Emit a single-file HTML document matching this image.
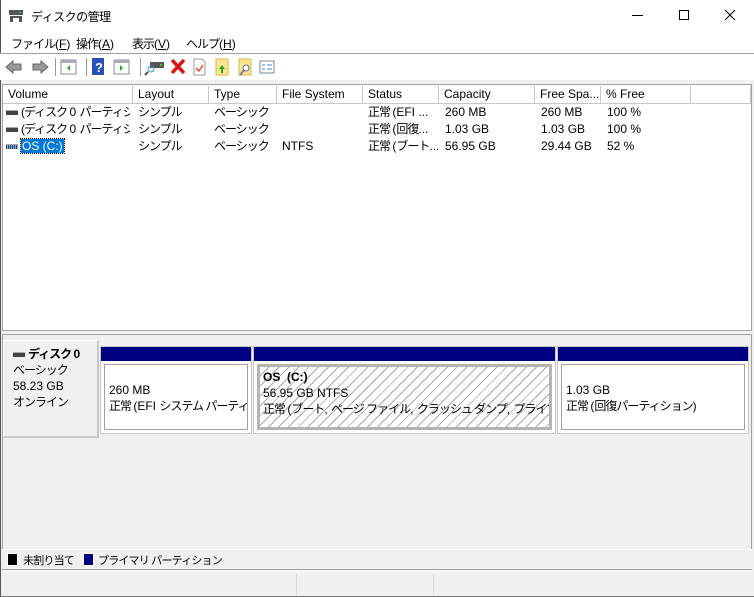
<!DOCTYPE html>
<html><head><meta charset="utf-8"><style>
*{margin:0;padding:0;box-sizing:border-box}
body{width:754px;height:597px;overflow:hidden;background:#f0f0f0;font-family:"Liberation Sans","Noto Sans CJK JP",sans-serif;font-size:12px;color:#000;position:relative}
.a{position:absolute;white-space:nowrap}
.j{letter-spacing:-1px}
.n{letter-spacing:0}
.title{left:0;top:0;width:754px;height:53px;background:#fff}
.hd{position:absolute;top:86px;height:18px;background:#fff;border-right:1px solid #c8c8c8;border-bottom:1px solid #c8c8c8;padding-left:5px;line-height:17px}
.cell{position:absolute;line-height:17px;overflow:hidden;white-space:nowrap}
.part{position:absolute;top:346px;height:88px;background:#fff;border:1px solid #c8c8c8}
.bar{position:absolute;left:0;right:0;top:0;height:14px;background:#000080}
.inner{position:absolute;left:3px;right:3px;top:17px;bottom:3px;border:1px solid #a0a0a0;padding:3px 4px;line-height:16px;overflow:hidden;white-space:nowrap}
.drv{display:inline-block;width:12px;height:5px;background:#444;border-top:1px solid #aaa;vertical-align:middle;margin-right:3px}
</style></head><body>
<div class="a title"></div>
<div class="a" style="left:0;top:0;width:1px;height:597px;background:#555"></div>
<svg class="a" style="left:8px;top:8px" width="16" height="16"><rect x="1" y="2" width="14" height="5" fill="#555"/><rect x="11" y="4" width="2" height="1" fill="#3c3"/><rect x="2" y="8" width="3" height="6" fill="#555"/><rect x="11" y="8" width="3" height="6" fill="#555"/><rect x="2" y="8" width="12" height="2" fill="#555"/></svg>
<div class="a" style="left:31px;top:8px;font-size:12px;letter-spacing:-0.5px">ディスクの管理</div>
<div class="a" style="left:632px;top:15px;width:11px;height:1px;background:#000"></div>
<div class="a" style="left:679px;top:10px;width:10px;height:10px;border:1px solid #000"></div>
<svg class="a" style="left:724px;top:9px" width="12" height="12"><path d="M1 1L11 11M11 1L1 11" stroke="#000" stroke-width="1"/></svg>
<div class="a j" style="left:11px;top:35px">ファイル<span class="n">(<u>F</u>)</span></div>
<div class="a j" style="left:76px;top:35px">操作<span class="n">(<u>A</u>)</span></div>
<div class="a j" style="left:132px;top:35px">表示<span class="n">(<u>V</u>)</span></div>
<div class="a j" style="left:186px;top:35px">ヘルプ<span class="n">(<u>H</u>)</span></div>
<div class="a" style="left:0;top:53px;width:754px;height:1px;background:#a0a0a0"></div>
<div class="a" style="left:0;top:54px;width:754px;height:26px;background:#fff"></div>
<svg class="a" style="left:4px;top:57px" width="290" height="20">
<path d="M2 10L9 4V7H17V13H9V16Z" fill="#999" stroke="#666"/>
<path d="M44 10L37 4V7H29V13H37V16Z" fill="#999" stroke="#666"/>
<rect x="51" y="1" width="1" height="18" fill="#999"/>
<rect x="57" y="3" width="15" height="14" fill="#fff" stroke="#889"/><rect x="57" y="3" width="15" height="3" fill="#aab"/><path d="M66 8L63 11L66 14Z" fill="#2a2"/>
<rect x="82" y="1" width="1" height="18" fill="#999"/>
<rect x="88" y="1" width="12" height="17" fill="#2850b8"/><text x="91" y="15" fill="#fff" font-size="13" font-weight="bold" font-family="Liberation Sans">?</text>
<rect x="110" y="3" width="15" height="14" fill="#fff" stroke="#889"/><rect x="110" y="3" width="15" height="3" fill="#aab"/><path d="M116 8L119 11L116 14Z" fill="#2a2"/>
<rect x="136" y="1" width="1" height="18" fill="#999"/>
<rect x="146" y="5" width="14" height="6" fill="#555"/><rect x="156" y="7" width="2" height="2" fill="#3c3"/><circle cx="147" cy="12" r="3" fill="none" stroke="#39c"/><path d="M144 15L141 18" stroke="#555" stroke-width="2"/>
<path d="M168 3L180 16M180 3L168 16" stroke="#e01010" stroke-width="3.5"/>
<path d="M190 2H198L201 5V18H190Z" fill="#fff" stroke="#999"/><path d="M192 11L195 14L199 8" stroke="#e05020" fill="none" stroke-width="1.5"/>
<rect x="212" y="2" width="12" height="16" fill="#fbe690" stroke="#d8b850"/><path d="M218 8L221 12H219V16H217V12H215Z" fill="#2a2"/>
<rect x="235" y="2" width="12" height="16" fill="#fbe690" stroke="#d8b850"/><circle cx="242" cy="11" r="3" fill="#fff" stroke="#669"/><path d="M240 13L236 18" stroke="#669" stroke-width="1.5"/>
<rect x="256" y="4" width="14" height="12" fill="#fff" stroke="#789"/><path d="M258 8h3M263 8h5M258 12h3M263 12h5" stroke="#38c"/>
</svg>
<div class="a" style="left:2px;top:84px;width:750px;height:247px;background:#fff;border:1px solid #a0a0a0"></div>
<div class="hd" style="left:3px;width:130px">Volume</div>
<div class="hd" style="left:133px;width:76px">Layout</div>
<div class="hd" style="left:209px;width:68px">Type</div>
<div class="hd" style="left:277px;width:86px">File System</div>
<div class="hd" style="left:363px;width:76px">Status</div>
<div class="hd" style="left:439px;width:96px">Capacity</div>
<div class="hd" style="left:535px;width:66px">Free Spa...</div>
<div class="hd" style="left:601px;width:90px">% Free</div>
<div class="hd" style="left:691px;width:60px"></div>
<div class="cell j" style="left:6px;top:104px;width:124px"><span class="drv"></span>(ディスク <span class="n">0 </span>パーティシ<span class="n">...</span></div>
<div class="cell j" style="left:6px;top:121px;width:124px"><span class="drv"></span>(ディスク <span class="n">0 </span>パーティシ<span class="n">...</span></div>
<div class="cell" style="left:6px;top:138px;width:124px"><span class="drv" style="background:repeating-linear-gradient(90deg,#246 0 1px,#8ad 1px 2px)"></span><span style="background:#0078d7;color:#fff;outline:1px dotted #000;padding:0 1px">OS (C:)</span></div>
<div class="cell j" style="left:138px;top:104px">シンプル</div><div class="cell j" style="left:138px;top:121px">シンプル</div><div class="cell j" style="left:138px;top:138px">シンプル</div>
<div class="cell j" style="left:214px;top:104px">ベーシック</div><div class="cell j" style="left:214px;top:121px">ベーシック</div><div class="cell j" style="left:214px;top:138px">ベーシック</div>
<div class="cell" style="left:282px;top:138px">NTFS</div>
<div class="cell j" style="left:368px;top:104px;width:70px">正常 <span class="n">(EFI ...</span></div><div class="cell j" style="left:368px;top:121px;width:70px">正常 <span class="n">(</span>回復<span class="n">...</span></div><div class="cell j" style="left:368px;top:138px;width:70px">正常 <span class="n">(</span>ブート<span class="n">...</span></div>
<div class="cell" style="left:445px;top:104px">260 MB</div><div class="cell" style="left:445px;top:121px">1.03 GB</div><div class="cell" style="left:445px;top:138px">56.95 GB</div>
<div class="cell" style="left:541px;top:104px">260 MB</div><div class="cell" style="left:541px;top:121px">1.03 GB</div><div class="cell" style="left:541px;top:138px">29.44 GB</div>
<div class="cell" style="left:607px;top:104px">100 %</div><div class="cell" style="left:607px;top:121px">100 %</div><div class="cell" style="left:607px;top:138px">52 %</div>
<div class="a" style="left:2px;top:334px;width:750px;height:215px;background:#f0f0f0;border-top:1px solid #a0a0a0;border-left:1px solid #a0a0a0;border-right:1px solid #a0a0a0"></div>
<div class="a" style="left:3px;top:340px;width:96px;height:98px;background:#f0f0f0;border-right:2px solid #c8c8c8;border-bottom:2px solid #c8c8c8;border-top:1px solid #fff;border-left:1px solid #fff"></div>
<div class="a j" style="left:13px;top:346px;line-height:16px"><span class="drv"></span><b>ディスク <span class="n">0</span></b><br>ベーシック<br><span class="n">58.23 GB</span><br>オンライン</div>
<div class="part" style="left:100px;width:152px"><div class="bar"></div><div class="inner j" style="padding-top:17px"><span class="n">260 MB</span><br>正常 <span class="n">(EFI </span>システム パーティション)</div></div>
<div class="part" style="left:253px;width:303px"><div class="bar"></div><div class="inner j" style="border:3px solid #b4b4b4;background:repeating-linear-gradient(135deg,#fff 0 6px,#a8a8a8 6px 7px);padding:2px 3px"><b class="n">OS&nbsp; (C:)</b><br><span class="n">56.95 GB NTFS</span><br>正常 <span class="n">(</span>ブート<span class="n">, </span>ページ ファイル<span class="n">, </span>クラッシュ ダンプ<span class="n">, </span>プライマリ パーティション)</div></div>
<div class="part" style="left:557px;width:192px"><div class="bar"></div><div class="inner j" style="padding-top:17px"><span class="n">1.03 GB</span><br>正常 <span class="n">(</span>回復パーティション)</div></div>
<div class="a" style="left:2px;top:549px;width:750px;height:1px;background:#fff"></div>
<div class="a" style="left:7px;top:553px;width:11px;height:13px;background:#000;border:1px solid #fff"></div>
<div class="a" style="left:23px;top:552px;font-size:11px;letter-spacing:-0.8px">未割り当て</div>
<div class="a" style="left:83px;top:553px;width:11px;height:13px;background:#000080;border:1px solid #fff"></div>
<div class="a" style="left:98px;top:552px;font-size:11px;letter-spacing:-0.8px">プライマリ パーティション</div>
<div class="a" style="left:2px;top:569px;width:750px;height:1px;background:#a0a0a0"></div>
<div class="a" style="left:2px;top:571px;width:750px;height:1px;background:#fff"></div>
<div class="a" style="left:296px;top:574px;width:1px;height:21px;background:#d8d8d8"></div>
<div class="a" style="left:433px;top:574px;width:1px;height:21px;background:#d8d8d8"></div>
<div class="a" style="left:0;top:596px;width:754px;height:1px;background:#777"></div>
</body></html>
